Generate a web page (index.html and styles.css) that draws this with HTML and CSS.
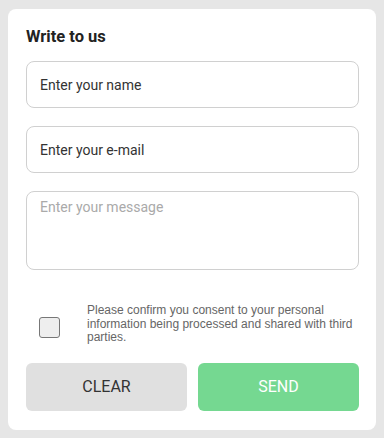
FILE: index.html
```html
<!DOCTYPE html>
<html lang="en">
<head>
<meta charset="utf-8">
<title>Write to us</title>
<link rel="stylesheet" href="styles.css">
</head>
<body>
<form class="card">
  <h2 class="title">Write to us</h2>
  <input class="field" type="text" placeholder="Enter your name">
  <input class="field" type="email" placeholder="Enter your e-mail">
  <textarea class="message" placeholder="Enter your message"></textarea>
  <label class="consent">
    <input class="check" type="checkbox">
    <span class="consent-text">Please confirm you consent to your personal information being processed and shared with third parties.</span>
  </label>
  <div class="actions">
    <button class="btn btn-clear" type="reset">CLEAR</button>
    <button class="btn btn-send" type="button">SEND</button>
  </div>
</form>
</body>
</html>
```
FILE: styles.css
```css
html, body {
  margin: 0;
}
body {
  background: #e6e6e6;
  padding: 9px 8px 6px;
  font-family: Roboto, "Liberation Sans", sans-serif;
}
.card {
  background: #fff;
  border-radius: 8px;
  padding: 18px 17px 19px 18px;
  display: flex;
  flex-direction: column;
}
.title {
  margin: 0 0 15px;
  font-size: 16.5px;
  line-height: 19px;
  font-weight: 700;
  color: #222;
}
.field,
.message {
  box-sizing: border-box;
  width: 100%;
  border: 1px solid #d0d0d0;
  border-radius: 8px;
  font-family: Roboto, "Liberation Sans", sans-serif;
  font-size: 14px;
  color: #333;
  background: #fff;
  outline: none;
}
.field {
  height: 47px;
  padding: 0 13px;
  margin: 0 0 18px;
}
.field::placeholder {
  color: #333;
  opacity: 1;
}
.message {
  height: 79px;
  padding: 7px 13px;
  margin: 0;
  resize: none;
  line-height: 16px;
  display: block;
}
.message::placeholder {
  color: #aaa;
  opacity: 1;
}
.consent {
  display: flex;
  align-items: flex-start;
  gap: 27px;
  margin-top: 34px;
  padding-left: 13px;
  cursor: pointer;
}
.check {
  appearance: none;
  -webkit-appearance: none;
  flex: none;
  width: 21px;
  height: 21px;
  margin: 13px 0 0;
  border: 1px solid #777;
  border-radius: 3px;
  background: #eee;
}
.consent-text {
  font-family: "Liberation Sans", Arial, sans-serif;
  font-size: 12px;
  line-height: 13.5px;
  color: #666;
}
.actions {
  display: grid;
  grid-template-columns: 1fr 1fr;
  gap: 11px;
  margin-top: 18px;
}
.btn {
  height: 48px;
  border: none;
  border-radius: 6px;
  font-family: Roboto, "Liberation Sans", sans-serif;
  font-size: 16px;
  cursor: pointer;
}
.btn-clear {
  background: #e0e0e0;
  color: #333;
}
.btn-send {
  background: #75d891;
  color: #fff;
}
```
